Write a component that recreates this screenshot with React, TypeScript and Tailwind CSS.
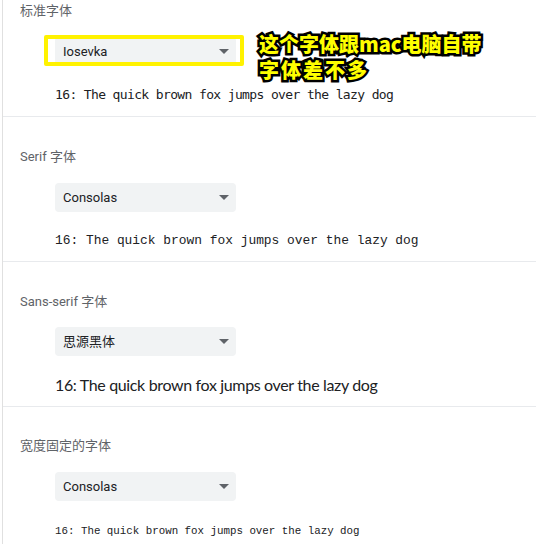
const labelFont = "[font-family:Roboto,'Noto_Sans_CJK_SC',sans-serif]"

const Arrow = () => (
  <svg width="10" height="5" viewBox="0 0 10 5" className="text-[#5f6368]">
    <path d="M0 0h10L5 5z" fill="currentColor" />
  </svg>
)

const Select = ({ value }: { value: string }) => (
  <div className="ml-[52px] flex h-[29px] w-[181px] items-center justify-between rounded bg-[#f1f3f4] pl-2 pr-[7px]">
    <span className={`text-[13px] text-[#202124] ${labelFont}`}>{value}</span>
    <Arrow />
  </div>
)

const Label = ({ children }: { children: string }) => (
  <div className={`pl-[17px] text-[13px] leading-4 text-[#5f6368] ${labelFont}`}>{children}</div>
)

export default function App() {
  return (
    <div className="relative h-[544px] w-[536px] overflow-hidden bg-white">
      <div className="ml-[2px] border-l border-[#e0e0e0]">
        {/* 标准字体 */}
        <div className="h-[117px] border-b border-[#e8eaed] pt-[3px]">
          <Label>标准字体</Label>
          <div className="mt-[18px]">
            <Select value="Iosevka" />
          </div>
          <p className="mt-[21px] ml-[52px] font-['DejaVu_Sans_Mono',monospace] text-[13px] leading-4 tracking-[-0.63px] text-[#202124]">
            16: The quick brown fox jumps over the lazy dog
          </p>
        </div>

        {/* Serif */}
        <div className="h-[145px] border-b border-[#e8eaed] pt-[32px]">
          <Label>Serif 字体</Label>
          <div className="mt-[18px]">
            <Select value="Consolas" />
          </div>
          <p className="mt-[21px] ml-[52px] font-['Liberation_Mono',monospace] text-[12.9px] leading-4 text-[#202124]">
            16: The quick brown fox jumps over the lazy dog
          </p>
        </div>

        {/* Sans-serif */}
        <div className="h-[145px] border-b border-[#e8eaed] pt-[32px]">
          <Label>Sans-serif 字体</Label>
          <div className="mt-[17px]">
            <Select value="思源黑体" />
          </div>
          <p className="mt-[19px] ml-[52px] font-['Lato',sans-serif] text-[16px] leading-5 tracking-[-0.35px] text-[#202124]">
            16: The quick brown fox jumps over the lazy dog
          </p>
        </div>

        {/* 宽度固定 */}
        <div className="h-[137px] pt-[31px]">
          <Label>宽度固定的字体</Label>
          <div className="mt-[18px]">
            <Select value="Consolas" />
          </div>
          <p className="mt-[22px] ml-[52px] font-['Liberation_Mono',monospace] text-[10.8px] leading-4 text-[#202124]">
            16: The quick brown fox jumps over the lazy dog
          </p>
        </div>
      </div>

      {/* annotation */}
      <div className="absolute left-[44px] top-[35px] h-[31px] w-[200px] rounded-[2px] border-4 border-[#fff200]" />
      <div className="absolute left-[259px] top-[31px] font-['Noto_Sans_CJK_SC',sans-serif] text-[20px] font-black leading-[26px] text-[#ffff00] [-webkit-text-stroke:5px_#000] [paint-order:stroke_fill]">
        <div>这个字体跟mac电脑自带</div>
        <div className="tracking-[2px]">字体差不多</div>
      </div>
    </div>
  )
}
